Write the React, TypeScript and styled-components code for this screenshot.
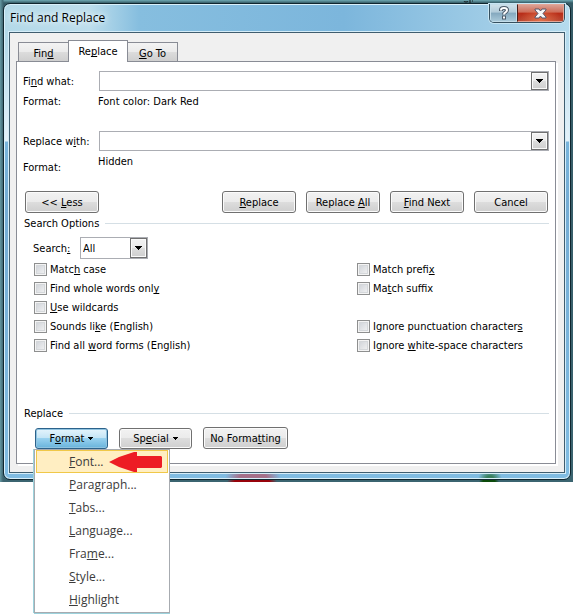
import React from "react";
import styled, { createGlobalStyle, css } from "styled-components";

const GlobalStyle = createGlobalStyle`
  *, *::before, *::after { box-sizing: border-box; }
  body {
    margin: 0;
    background: #fff;
    color: #000;
    font: 11px/15px "DejaVu Sans Condensed", "DejaVu Sans", sans-serif;
  }
  button, input, select { font: inherit; color: inherit; margin: 0; }
  u { text-decoration-skip-ink: none; text-underline-offset: 1px; text-decoration-thickness: 1px; }
`;

const Page = styled.div`
  min-height: 100vh;
`;

const Desktop = styled.main`
  position: relative;
  padding: 3px 2px 2px 3px;
  background:
    radial-gradient(ellipse 25px 8px at 252px 100%, #97030b 70%, transparent) no-repeat,
    radial-gradient(ellipse 10px 8px at 489px 100%, #0b4a0b 60%, transparent) no-repeat,
    linear-gradient(90deg, #6599a3 0, #3f6672 3px, transparent 4px),
    linear-gradient(#6fa9b3 0, #355b66 3px, #3b6470 100%);
`;

const Behind = styled.svg`
  position: absolute;
  top: 0;
  right: 100px;
`;

const Dialog = styled.section`
  padding: 0 5px 6px;
  border: 1px solid #10262f;
  border-radius: 7px;
  box-shadow: inset 0 0 0 1px #d9f0fa;
  background:
    radial-gradient(ellipse 28px 16px at 249px 100%, #a57089 50%, transparent 100%) no-repeat,
    radial-gradient(ellipse 12px 10px at 486px 100%, #397f5e 30%, transparent 100%) no-repeat,
    linear-gradient(transparent 40px, #d8ebf5 110px, #e4f2f9 137px, #79b5dc 138px, #74acd4 200px, #80bce2 100%),
    linear-gradient(90deg, #b3d9e8 0, #bddeec 85px, #86bedf 135px, #7cb6dc 60%, #a5d0e8 90%, #b5dbed 100%);
`;

const TitleBar = styled.header`
  display: flex;
  justify-content: space-between;
  align-items: flex-start;
  height: 28px;
  padding-left: 1px;
`;

const Title = styled.h1`
  margin: 5px 0 0;
  font: 12px/18px "Open Sans", "Noto Sans", sans-serif;
  text-shadow: 0 0 8px #fff, 0 0 5px #e8f6fc;
`;

const Caption = styled.div`
  display: flex;
  height: 19px;
  border: 1px solid #35505f;
  border-top: 0;
  border-radius: 0 0 5px 5px;
  box-shadow: 0 0 0 1px #c9e6f3;
  overflow: hidden;
`;

const CaptionButton = styled.button<{ $close?: boolean }>`
  display: grid;
  place-items: center;
  width: ${(p) => (p.$close ? 47 : 27)}px;
  padding: 0;
  border: 1px solid ${(p) => (p.$close ? "#e3a697" : "#c4dde9")};
  border-left-color: ${(p) => (p.$close ? "#4a1c17" : "#c4dde9")};
  background: ${(p) =>
    p.$close
      ? "radial-gradient(ellipse at 50% 100%, #e2714a, transparent 65%), linear-gradient(#dba093 0, #cd6d59 45%, #b92c17 50%, #b84732 100%)"
      : "linear-gradient(#cfe0e9 0, #b1cbd9 45%, #84a8be 50%, #a8c8d8 100%)"};
`;

const Client = styled.div`
  padding: 7px 8px 8px 6px;
  border: 1px solid #3f5d6f;
  box-shadow: 0 0 0 1px #d5edf8;
  background: #f0f0f0;
`;

const TabList = styled.div`
  display: flex;
  align-items: flex-end;
  height: 21px;
  padding-left: 2px;
`;

const Tab = styled.button<{ $active?: boolean }>`
  height: 19px;
  width: 51px;
  padding: 2px 0 0;
  border: 1px solid #898c95;
  border-bottom: 0;
  background: linear-gradient(#f3f3f3 0, #ebebeb 48%, #dcdcdc 52%, #cfcfcf 100%);
  ${(p) =>
    p.$active &&
    css`
      z-index: 1;
      height: 22px;
      width: 60px;
      margin: 0 -1px -1px;
      padding: 0;
      background: #fff;
    `}
`;

const Panel = styled.form`
  padding: 9px 6px 14px 8px;
  border: 1px solid #898c95;
  box-shadow: 2px 2px 0 #fff;
  background: #fff;
`;

const FieldRow = styled.div`
  display: grid;
  grid-template-columns: 74px 1fr;
  align-items: center;
`;

const FieldLabel = styled.label`
  margin-left: -2px;
  white-space: nowrap;
`;

const FormatRow = styled.div<{ $drop?: boolean }>`
  display: grid;
  grid-template-columns: 73px 1fr;
  margin: 3px 0 ${(p) => (p.$drop ? 16 : 22)}px;
  span:first-child {
    margin-left: -2px;
    padding-top: ${(p) => (p.$drop ? 6 : 0)}px;
  }
`;

const Combo = styled.div`
  display: flex;
  height: 20px;
  border: 1px solid #abadb3;
  background: #fff;
`;

const TextBox = styled.input`
  flex: 1;
  min-width: 0;
  padding: 0 3px;
  border: 0;
  outline: 0;
  background: transparent;
`;

const DropButton = styled.button`
  display: grid;
  place-items: center;
  width: 17px;
  padding: 0;
  border: 1px solid #707070;
  box-shadow: inset 0 0 0 1px #fafafa;
  background: linear-gradient(#f2f2f2 0, #ebebeb 50%, #dddddd 50%, #cfcfcf 100%);
`;

const ButtonRow = styled.div`
  display: flex;
  gap: 10px;
  padding-right: 1px;
`;

const PushButton = styled.button<{ $first?: boolean; $hot?: boolean; $kind?: "menu" | "wide" }>`
  display: flex;
  align-items: center;
  justify-content: center;
  gap: 4px;
  width: ${(p) => (p.$kind === "wide" ? 85 : p.$kind === "menu" ? 73 : 74)}px;
  height: ${(p) => (p.$kind === "menu" ? 21 : 22)}px;
  margin-right: ${(p) => (p.$first ? "auto" : "0")};
  padding: 0;
  white-space: nowrap;
  border: 1px solid ${(p) => (p.$hot ? "#2c628b" : "#707070")};
  border-radius: 3px;
  box-shadow: inset 0 0 0 1px ${(p) => (p.$hot ? "#8fc3e0" : "#fbfbfb")};
  background: ${(p) =>
    p.$hot
      ? "linear-gradient(#e5f4fc 0, #c4e5f6 48%, #98d1ef 50%, #68b3db 100%)"
      : "linear-gradient(#f2f2f2 0, #ebebeb 48%, #dddddd 50%, #cfcfcf 100%)"};
`;

const GroupHeading = styled.h2<{ $apart?: boolean }>`
  display: flex;
  align-items: center;
  gap: 6px;
  margin: ${(p) => (p.$apart ? 51 : 3)}px 0 6px -1px;
  font: inherit;
  &::after {
    content: "";
    flex: 1;
    height: 1px;
    background: #d5dfe5;
  }
`;

const SearchRow = styled.div`
  display: flex;
  align-items: center;
  padding-left: 8px;
  margin-bottom: 1px;
`;

const SearchLabel = styled.label`
  width: 47px;
`;

const SelectFrame = styled.div`
  display: grid;
  grid-template-columns: 1fr 17px;
  width: 68px;
  height: 22px;
  border: 1px solid #abadb3;
`;

const Select = styled.select`
  grid-area: 1 / 1 / 2 / 3;
  appearance: none;
  padding: 0 2px;
  border: 0;
  background: transparent;
`;

const SelectArrow = styled.span`
  grid-area: 1 / 2;
  display: grid;
  place-items: center;
  pointer-events: none;
  border: 1px solid #707070;
  box-shadow: inset 0 0 0 1px #fafafa;
  background: linear-gradient(#f2f2f2 0, #ebebeb 50%, #dddddd 50%, #cfcfcf 100%);
`;

const Options = styled.div`
  display: grid;
  grid-template-columns: 323px 1fr;
  grid-auto-rows: 19px;
  padding-left: 9px;
`;

const Option = styled.label<{ $right?: boolean }>`
  grid-column: ${(p) => (p.$right ? 2 : 1)};
  display: flex;
  align-items: center;
  gap: 3px;
  white-space: nowrap;
`;

const CheckBox = styled.input`
  appearance: none;
  width: 13px;
  height: 13px;
  border: 1px solid #8e8f8f;
  background: linear-gradient(135deg, #cbcfd5, #f6f6f6) padding-box;
  box-shadow: inset 0 0 0 1px #f4f4f4, inset 0 0 0 2px #d4d7da;
`;

const FormatActions = styled.div`
  display: flex;
  align-items: flex-end;
  gap: 11px;
  padding-left: 10px;
`;

const MenuAnchor = styled.div`
  position: relative;
`;

const Menu = styled.div`
  position: absolute;
  z-index: 2;
  top: 100%;
  left: -1px;
  width: 136px;
  padding: 0 1px 1px;
  border: 1px solid #a7abb0;
  box-shadow: -1px 0 0 #9cd2dc, 0 1px 0 #9cd2dc;
  background: #fff;
`;

const MenuItem = styled.button<{ $selected?: boolean }>`
  display: flex;
  align-items: center;
  gap: 5px;
  width: 100%;
  height: 23px;
  padding: 0 0 0 32px;
  border: 1px solid ${(p) => (p.$selected ? "#f0c848" : "transparent")};
  background: ${(p) => (p.$selected ? "#ffeec2" : "transparent")};
  color: #3b3b3b;
  font: 12px/16px "Open Sans", "Noto Sans", sans-serif;
  white-space: nowrap;
`;

/** Text whose access key is marked with "&" before the letter. */
function Keyed({ text }: { text: string }) {
  const at = text.indexOf("&");
  if (at < 0) return <span>{text}</span>;
  return (
    <span>
      {text.slice(0, at)}
      <u>{text[at + 1]}</u>
      {text.slice(at + 2)}
    </span>
  );
}

function DownArrow({ small }: { small?: boolean }) {
  return small ? (
    <svg width="5" height="3" viewBox="0 0 5 3" shapeRendering="crispEdges" aria-hidden="true">
      <path d="M0 0h5v1H4v1H3v1H2V2H1V1H0z" />
    </svg>
  ) : (
    <svg width="7" height="4" viewBox="0 0 7 4" shapeRendering="crispEdges" aria-hidden="true">
      <path d="M0 0h7v1H6v1H5v1H4v1H3V3H2V2H1V1H0z" />
    </svg>
  );
}

const options: { text: string; right?: boolean }[] = [
  { text: "Matc&h case" },
  { text: "Match prefi&x", right: true },
  { text: "Find whole words onl&y" },
  { text: "Ma&tch suffix", right: true },
  { text: "&Use wildcards" },
  { text: "Sounds li&ke (English)" },
  { text: "Ignore punctuation character&s", right: true },
  { text: "Find all &word forms (English)" },
  { text: "Ignore &white-space characters", right: true },
];

const menuItems = ["&Font...", "&Paragraph...", "&Tabs...", "&Language...", "Fra&me...", "&Style...", "&Highlight"];

export default function App() {
  return (
    <Page>
      <GlobalStyle />
      <Desktop>
        <Behind width="10" height="3" viewBox="0 0 10 3" aria-hidden="true">
          <path d="M1 1q0 1 2 1t2-1M7 0v3M9 1h1" fill="none" stroke="#10171b" />
        </Behind>
        <Dialog role="dialog" aria-labelledby="dialog-title">
          <TitleBar>
            <Title id="dialog-title">Find and Replace</Title>
            <Caption>
              <CaptionButton type="button" aria-label="Help">
                <svg width="12" height="14" viewBox="0 0 12 14" aria-hidden="true">
                  <path d="M3 5V4q0-2 3-2t3 2q0 1.500-1.500 2.300T6 8.500" fill="none" stroke="#4b5a69" strokeWidth="4" />
                  <path d="M4 9.500h4v4H4z" fill="#4b5a69" />
                  <path d="M3 4.500V4q0-2 3-2t3 2q0 1.500-1.500 2.300T6 8.500M6 10.500v2" fill="none" stroke="#fff" strokeWidth="2" />
                </svg>
              </CaptionButton>
              <CaptionButton type="button" $close aria-label="Close">
                <svg width="13" height="11" viewBox="0 0 13 11" aria-hidden="true">
                  <path
                    d="M1 1h4l1.500 2L8 1h4v1L9 5.500 12 9v1H8L6.500 8 5 10H1V9l3-3.500L1 2z"
                    fill="#f7f7f7"
                    stroke="#54546a"
                  />
                </svg>
              </CaptionButton>
            </Caption>
          </TitleBar>
          <Client>
            <TabList role="tablist">
              <Tab type="button" role="tab"><Keyed text="Fin&d" /></Tab>
              <Tab type="button" role="tab" aria-selected="true" $active><Keyed text="Re&place" /></Tab>
              <Tab type="button" role="tab"><Keyed text="&Go To" /></Tab>
            </TabList>
            <Panel>
              <FieldRow>
                <FieldLabel htmlFor="find"><Keyed text="Fi&nd what:" /></FieldLabel>
                <Combo>
                  <TextBox id="find" type="text" />
                  <DropButton type="button" aria-label="Recent searches"><DownArrow /></DropButton>
                </Combo>
              </FieldRow>
              <FormatRow>
                <span>Format:</span>
                <span>Font color: Dark Red</span>
              </FormatRow>
              <FieldRow>
                <FieldLabel htmlFor="replace"><Keyed text="Replace w&ith:" /></FieldLabel>
                <Combo>
                  <TextBox id="replace" type="text" />
                  <DropButton type="button" aria-label="Recent replacements"><DownArrow /></DropButton>
                </Combo>
              </FieldRow>
              <FormatRow $drop>
                <span>Format:</span>
                <span>Hidden</span>
              </FormatRow>
              <ButtonRow>
                <PushButton type="button" $first><Keyed text="<< &Less" /></PushButton>
                <PushButton type="button"><Keyed text="&Replace" /></PushButton>
                <PushButton type="button"><Keyed text="Replace &All" /></PushButton>
                <PushButton type="button"><Keyed text="&Find Next" /></PushButton>
                <PushButton type="button">Cancel</PushButton>
              </ButtonRow>
              <GroupHeading>Search Options</GroupHeading>
              <SearchRow>
                <SearchLabel htmlFor="direction"><Keyed text="Search&:" /></SearchLabel>
                <SelectFrame>
                  <Select id="direction" defaultValue="All">
                    <option>All</option>
                    <option>Down</option>
                    <option>Up</option>
                  </Select>
                  <SelectArrow><DownArrow /></SelectArrow>
                </SelectFrame>
              </SearchRow>
              <Options>
                {options.map((o) => (
                  <Option key={o.text} $right={o.right}>
                    <CheckBox type="checkbox" />
                    <Keyed text={o.text} />
                  </Option>
                ))}
              </Options>
              <GroupHeading $apart>Replace</GroupHeading>
              <FormatActions>
                <MenuAnchor>
                  <PushButton type="button" $kind="menu" $hot aria-haspopup="menu" aria-expanded="true">
                    <Keyed text="F&ormat" /><DownArrow small />
                  </PushButton>
                  <Menu role="menu">
                    {menuItems.map((item, i) => (
                      <MenuItem key={item} type="button" role="menuitem" $selected={i === 0}>
                        <Keyed text={item} />
                        {i === 0 && (
                          <svg width="54" height="20" viewBox="0 0 54 20" aria-hidden="true">
                            <path d="M0 10 L10 5 25 0h3v4h24l1 1v10l-1 1H28v4h-3L10 15z" fill="#ed1c24" />
                          </svg>
                        )}
                      </MenuItem>
                    ))}
                  </Menu>
                </MenuAnchor>
                <PushButton type="button" $kind="menu" aria-haspopup="menu">
                  <Keyed text="Sp&ecial" /><DownArrow small />
                </PushButton>
                <PushButton type="button" $kind="wide"><Keyed text="No Forma&tting" /></PushButton>
              </FormatActions>
            </Panel>
          </Client>
        </Dialog>
      </Desktop>
    </Page>
  );
}
